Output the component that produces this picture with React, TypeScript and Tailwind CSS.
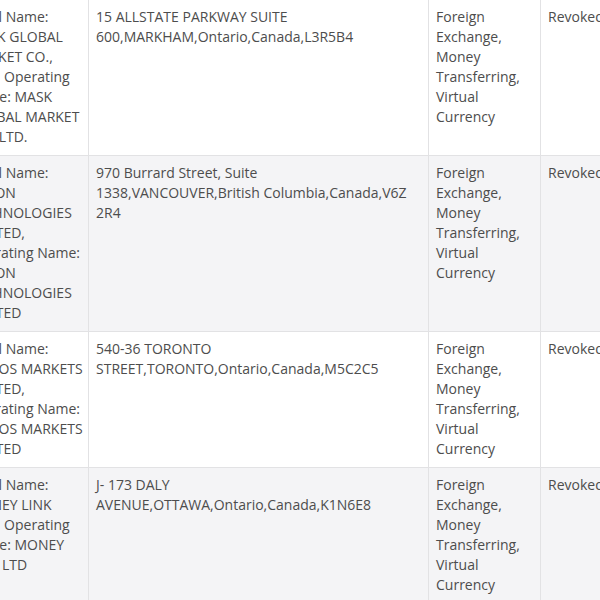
const rows = [
    {
        name: "Legal Name: MASK GLOBAL MARKET CO., LTD., Operating Name: MASK GLOBAL MARKET CO., LTD.",
        address: "15 ALLSTATE PARKWAY SUITE 600,MARKHAM,Ontario,Canada,L3R5B4",
        services: "Foreign Exchange, Money Transferring, Virtual Currency",
        status: "Revoked",
    },
    {
        name: "Legal Name: NEXON TECHNOLOGIES LIMITED, Operating Name: NEXON TECHNOLOGIES LIMITED",
        address: "970 Burrard Street, Suite 1338,VANCOUVER,British Columbia,Canada,V6Z 2R4",
        services: "Foreign Exchange, Money Transferring, Virtual Currency",
        status: "Revoked",
    },
    {
        name: "Legal Name: MEDOS\u00a0MARKETS LIMITED, Operating Name: MEDOS\u00a0MARKETS LIMITED",
        address: "540-36 TORONTO STREET,TORONTO,Ontario,Canada,M5C2C5",
        services: "Foreign Exchange, Money Transferring, Virtual Currency",
        status: "Revoked",
    },
    {
        name: "Legal Name: MONEY LINK LTD., Operating Name: MONEY LINK LTD",
        address: "J- 173 DALY AVENUE,OTTAWA,Ontario,Canada,K1N6E8",
        services: "Foreign Exchange, Money Transferring, Virtual Currency",
        status: "Revoked",
    },
];

const App: React.FC = (): JSX.Element => {
    return (
        <div className="w-[600px] h-[600px] overflow-hidden bg-white">
            <table
                className="table-fixed border-collapse -ml-[40px] -mt-px w-[780px] text-[14px] leading-[20px] text-[#4d4d4d]"
                style={{ fontFamily: '"Open Sans", "Noto Sans", sans-serif' }}
            >
                <colgroup>
                    <col className="w-[128px]" />
                    <col className="w-[340px]" />
                    <col className="w-[112px]" />
                    <col className="w-[200px]" />
                </colgroup>
                <tbody>
                    {rows.map((row, i) => (
                        <tr key={i} className={i % 2 === 1 ? "bg-[#f4f4f6]" : "bg-white"}>
                            <td className="border border-[#e2e2e4] px-[7px] pt-[7px] pb-[8px] align-top">{row.name}</td>
                            <td className="border border-[#e2e2e4] px-[7px] pt-[7px] pb-[8px] align-top">{row.address}</td>
                            <td className="border border-[#e2e2e4] px-[7px] pt-[7px] pb-[8px] align-top">{row.services}</td>
                            <td className="border border-[#e2e2e4] px-[7px] pt-[7px] pb-[8px] align-top">{row.status}</td>
                        </tr>
                    ))}
                </tbody>
            </table>
        </div>
    );
};

export default App;
